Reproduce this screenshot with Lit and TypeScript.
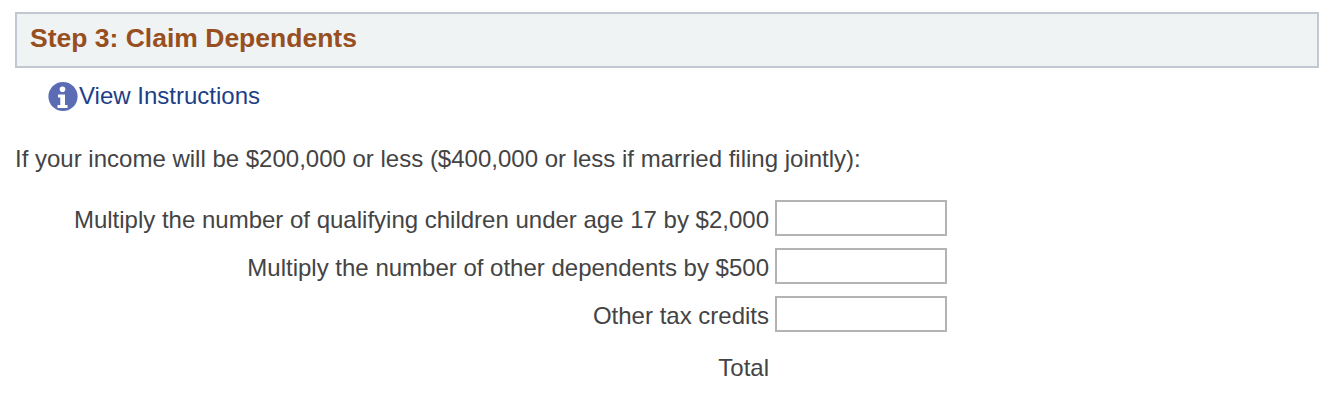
import { LitElement, html, css } from "lit";
import { customElement } from "lit/decorators.js";

@customElement("app-root")
export class AppRoot extends LitElement {
  static styles = css`
    :host { display: block; font-family: "Liberation Sans", Arial, sans-serif; font-size: 24px; color: #444; background: #fff; height: 404px; padding: 12px 11px 0 15px; box-sizing: border-box; }
    .head { height: 56px; box-sizing: border-box; border: 2px solid #c1c8d0; background: #eff3f4; display: flex; align-items: center; padding: 0 0 4px 13px; color: #974f21; font-weight: 700; font-size: 26.5px; }
    .link { display: flex; align-items: center; margin: 11px 0 0 32px; height: 34px; color: #1c3f86; }
    .link svg { width: 32px; height: 33px; flex: none; filter: blur(0.5px); }
    .intro { margin-top: 29px; height: 34px; line-height: 34px; }
    .rows { margin-top: 24px; display: grid; grid-template-columns: 754px 172px; column-gap: 6px; row-gap: 12px; justify-content: start; align-items: start; }
    .label { text-align: right; height: 36px; line-height: 40px; }
    .field { height: 36px; box-sizing: border-box; border: 2px solid #b3b3b3; background: #fff; width: 172px; display: block; padding: 0; margin: 0; border-radius: 0; outline: none; }
    .total { margin-top: 4px; }
  `;
  render() {
    const rows = ["Multiply the number of qualifying children under age 17 by $2,000", "Multiply the number of other dependents by $500", "Other tax credits"];
    return html`
      <div class="head">Step 3: Claim Dependents</div>
      <div class="link">
        <svg viewBox="0 0 32 33">
          <circle cx="16" cy="16.5" r="14.6" fill="#5b6cb5"/>
          <circle cx="15.5" cy="9.3" r="2.8" fill="#fff"/>
          <path d="M11 14.5h7v10.5h2.5v3H10.500v-3h2.800v-7.500h-2.300z" fill="#fff"/>
        </svg>
        <span>View Instructions</span>
      </div>
      <div class="intro">If your income will be $200,000 or less ($400,000 or less if married filing jointly):</div>
      <div class="rows">
        ${rows.map((r) => html`<div class="label">${r}</div><input class="field" type="text" />`)}
        <div class="label total">Total</div><div></div>
      </div>
    `;
  }
}
